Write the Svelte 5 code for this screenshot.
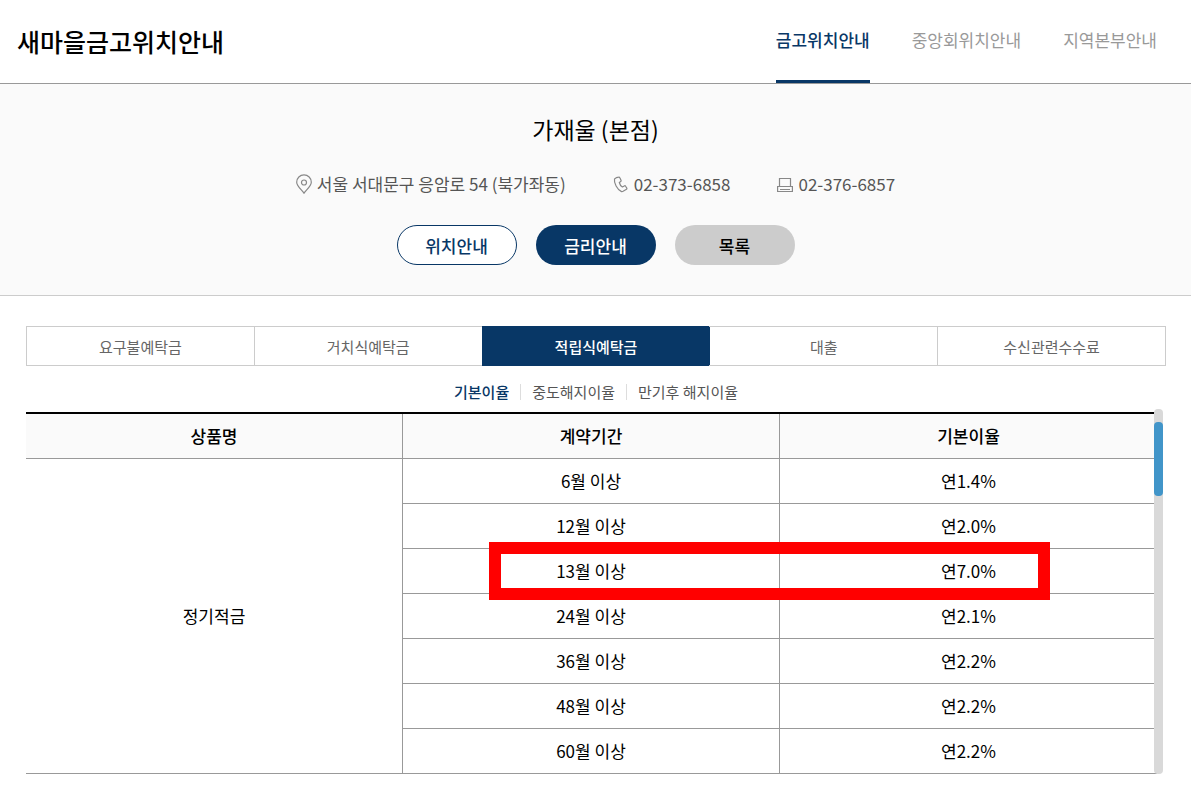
<script>
  const menus = ['금고위치안내', '중앙회위치안내', '지역본부안내'];
  const tabs = ['요구불예탁금', '거치식예탁금', '적립식예탁금', '대출', '수신관련수수료'];
  const rateTypes = ['기본이율', '중도해지이율', '만기후 해지이율'];

  const rates = [
    { period: '6월 이상', rate: '연1.4%' },
    { period: '12월 이상', rate: '연2.0%' },
    { period: '13월 이상', rate: '연7.0%', marked: true },
    { period: '24월 이상', rate: '연2.1%' },
    { period: '36월 이상', rate: '연2.2%' },
    { period: '48월 이상', rate: '연2.2%' },
    { period: '60월 이상', rate: '연2.2%' }
  ];

  let activeMenu = $state(0);
  let activeTab = $state(2);
  let activeType = $state(0);
</script>

<header class="header">
  <h1>새마을금고위치안내</h1>
  <nav class="menu">
    {#each menus as menu, i}
      <a href="#menu{i}" class:active={activeMenu === i} onclick={() => (activeMenu = i)}>{menu}</a>
    {/each}
  </nav>
</header>

<section class="branch">
  <h2>가재울 (본점)</h2>
  <ul class="contact">
    <li>
      <svg width="16" height="20" viewBox="0 0 16 20" fill="none" stroke="#888" stroke-width="1.2">
        <path d="M8 19.2C6.2 16.2.7 12.3.7 8.200a7.300 7.300 0 0 1 14.600 0c0 4.100-5.500 8-7.300 11z" />
        <circle cx="8" cy="8.500" r="2.500" />
      </svg>
      서울 서대문구 응암로 54 (북가좌동)
    </li>
    <li>
      <svg width="16" height="18" viewBox="0 0 16 18" fill="none" stroke="#888" stroke-width="1.2" stroke-linejoin="round">
        <path d="M3.600 2.600 1.500 3.900C.7 8 4.300 14.600 8.200 16.400c.7.3 1.300.2 1.900-.1l3.400-2c.5-.3.600-.7.300-1.200l-1.200-1.900c-.3-.5-.8-.6-1.300-.3l-1.900 1.100C7.900 11.100 6.700 9.200 6.300 7.500l1.400-.9c.5-.3.600-.7.400-1.200L7 3C6.700 2.300 6.200 2.100 5.500 2.200c-.7 0-1.300.1-1.900.4z" />
      </svg>
      02-373-6858
    </li>
    <li>
      <svg width="16" height="18" viewBox="0 0 16 18" fill="none" stroke="#888" stroke-width="1.200">
        <path d="M2.500 11.500v-8h11v8M.6 11.500h14.800v5H.6zM3 14.500h10" />
      </svg>
      02-376-6857
    </li>
  </ul>
  <div class="actions">
    <button type="button" class="outline">위치안내</button>
    <button type="button" class="primary">금리안내</button>
    <button type="button" class="gray">목록</button>
  </div>
</section>

<main class="content">
  <div class="tabs">
    {#each tabs as tab, i}
      <button type="button" class:active={activeTab === i} onclick={() => (activeTab = i)}>{tab}</button>
    {/each}
  </div>

  <div class="rate-types">
    {#each rateTypes as type, i}
      <button type="button" class:active={activeType === i} onclick={() => (activeType = i)}>{type}</button>
    {/each}
  </div>

  <div class="table-wrap">
    <table>
      <thead>
        <tr>
          <th>상품명</th>
          <th>계약기간</th>
          <th>기본이율</th>
        </tr>
      </thead>
      <tbody>
        {#each rates as row, i}
          <tr>
            {#if i === 0}
              <td rowspan={rates.length}>정기적금</td>
            {/if}
            <td>{row.period}</td>
            <td>
              {row.rate}
              {#if row.marked}
                <span class="mark"></span>
              {/if}
            </td>
          </tr>
        {/each}
      </tbody>
    </table>
    <div class="scrollbar"><div class="thumb"></div></div>
  </div>
</main>

<style>
  :global(body) {
    margin: 0;
    background: #fff;
    color: #000;
    font-family: 'Noto Sans CJK KR', 'Noto Sans', sans-serif;
    font-size: 17px;
  }

  button {
    padding: 0;
    border: 0;
    background: none;
    color: inherit;
    font: inherit;
    cursor: pointer;
  }

  .header {
    display: flex;
    justify-content: space-between;
    height: 83px;
    padding: 0 34px 0 17px;
    border-bottom: 1px solid #999;
  }

  h1 {
    margin: 0;
    font-size: 25px;
    font-weight: 500;
    line-height: 83px;
  }

  .menu {
    display: flex;
    gap: 42px;
  }

  .menu a {
    border-bottom: 3px solid transparent;
    color: #999;
    line-height: 80px;
    text-decoration: none;
  }

  .menu a.active {
    border-color: #083766;
    color: #083766;
    font-weight: 500;
  }

  .branch {
    display: flex;
    flex-direction: column;
    align-items: center;
    padding: 27px 0 30px;
    border-bottom: 1px solid #ccc;
    background: #fafafa;
  }

  h2 {
    margin: 0;
    font-size: 23px;
    font-weight: 400;
    line-height: 36px;
  }

  .contact {
    display: flex;
    gap: 47px;
    margin: 23px 0 27px;
    padding: 0;
    color: #555;
    line-height: 28px;
    list-style: none;
  }

  .contact li {
    display: flex;
    align-items: center;
    gap: 5px;
  }

  .actions {
    display: flex;
    gap: 19px;
  }

  .actions button {
    width: 120px;
    height: 40px;
    border-radius: 20px;
    font-weight: 500;
  }

  .actions .outline {
    border: 1px solid #083766;
    background: #fff;
    color: #083766;
  }

  .actions .primary {
    background: #083766;
    color: #fff;
  }

  .actions .gray {
    background: #ccc;
  }

  .content {
    padding: 30px 25px 16px 26px;
  }

  .tabs {
    display: flex;
    box-sizing: border-box;
    height: 40px;
    border: 1px solid #ccc;
  }

  .tabs button {
    flex: 1;
    color: #666;
    font-size: 15px;
  }

  .tabs button + button {
    border-left: 1px solid #ccc;
  }

  .tabs button.active {
    margin: -1px 0;
    border-color: #083766;
    background: #083766;
    color: #fff;
    font-weight: 500;
  }

  .tabs button.active + button {
    border-color: #083766;
  }

  .rate-types {
    display: flex;
    justify-content: center;
    align-items: center;
    height: 46px;
    padding-top: 6px;
    box-sizing: border-box;
    color: #555;
    font-size: 15px;
  }

  .rate-types button {
    line-height: 16px;
  }

  .rate-types button + button {
    margin-left: 11px;
    padding-left: 11px;
    border-left: 1px solid #ddd;
  }

  .rate-types .active {
    color: #083766;
    font-weight: 500;
  }

  .table-wrap {
    position: relative;
    margin-right: 9px;
  }

  table {
    width: 100%;
    border-top: 2px solid #000;
    border-spacing: 0;
    table-layout: fixed;
  }

  tr {
    position: relative;
  }

  th,
  td {
    height: 44px;
    padding: 0;
    border-bottom: 1px solid #999;
    text-align: center;
    line-height: 24px;
  }

  th {
    background: #fafafa;
    font-weight: 500;
  }

  th:not(:last-child),
  td:not(:last-child) {
    border-right: 1px solid #999;
  }

  .mark {
    position: absolute;
    top: -7px;
    right: 9.5%;
    bottom: -6px;
    left: 40.9%;
    z-index: 1;
    border: 12px solid #f00;
    pointer-events: none;
  }

  .scrollbar {
    position: absolute;
    top: -3px;
    right: -6px;
    bottom: 0;
    width: 9px;
    border-radius: 4px;
    background: #d9d9d9;
  }

  .thumb {
    height: 74px;
    margin-top: 13px;
    border-radius: 4px;
    background: #4195c9;
  }
</style>
